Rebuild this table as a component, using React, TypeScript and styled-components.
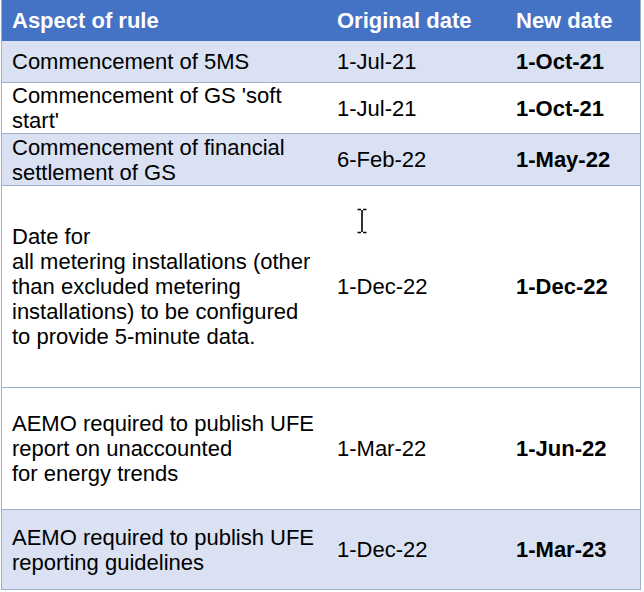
import React from "react";
import styled, { createGlobalStyle } from "styled-components";

const Global = createGlobalStyle`
  html, body { margin: 0; padding: 0; background: #ffffff; }
  body { font-family: "Liberation Sans", Arial, sans-serif; }
`;

const Page = styled.div`
  position: relative;
  width: 644px;
  height: 592px;
  padding-left: 1px;
  box-sizing: border-box;
`;

const Table = styled.div`
  width: 640px;
  border-left: 1px solid #9fb0cf;
  border-right: 1px solid #9fb0cf;
  box-sizing: border-box;
  display: flex;
  flex-direction: column;
`;

const Row = styled.div<{ $h: number; $tone: "head" | "band" | "plain" }>`
  display: grid;
  grid-template-columns: 325px 179px 1fr;
  align-items: center;
  height: ${(p) => p.$h}px;
  box-sizing: border-box;
  border-bottom: 1px solid ${(p) => (p.$tone === "head" ? "#4472c4" : "#9fb0cf")};
  background: ${(p) =>
    p.$tone === "head" ? "#4472c4" : p.$tone === "band" ? "#d9e1f2" : "#ffffff"};
  color: ${(p) => (p.$tone === "head" ? "#ffffff" : "#000000")};
`;

const Cell = styled.div<{ $bold?: boolean }>`
  padding-left: 10px;
  padding-right: 10px;
  font-size: 22px;
  line-height: 25px;
  font-weight: ${(p) => (p.$bold ? 700 : 400)};
`;

const Cursor = styled.svg`
  position: absolute;
  left: 356px;
  top: 208px;
`;

type R = { h: number; tone: "band" | "plain"; aspect: React.ReactNode; orig: string; next: string };

const rows: R[] = [
  { h: 42, tone: "band", aspect: "Commencement of 5MS", orig: "1-Jul-21", next: "1-Oct-21" },
  { h: 51, tone: "plain", aspect: "Commencement of GS 'soft start'", orig: "1-Jul-21", next: "1-Oct-21" },
  { h: 52, tone: "band", aspect: "Commencement of financial settlement of GS", orig: "6-Feb-22", next: "1-May-22" },
  {
    h: 202,
    tone: "plain",
    aspect: (
      <>
        Date for
        <br />
        all metering installations (other than excluded metering installations) to be configured to provide
        5-minute data.
      </>
    ),
    orig: "1-Dec-22",
    next: "1-Dec-22",
  },
  {
    h: 122,
    tone: "plain",
    aspect: (
      <>
        AEMO required to publish UFE report on unaccounted
        <br />
        for energy trends
      </>
    ),
    orig: "1-Mar-22",
    next: "1-Jun-22",
  },
  {
    h: 80,
    tone: "band",
    aspect: "AEMO required to publish UFE reporting guidelines",
    orig: "1-Dec-22",
    next: "1-Mar-23",
  },
];

export default function App() {
  return (
    <Page>
      <Global />
      <Table>
        <Row $h={41} $tone="head">
          <Cell $bold>Aspect of rule</Cell>
          <Cell $bold>Original date</Cell>
          <Cell $bold>New date</Cell>
        </Row>
        {rows.map((r, i) => (
          <Row key={i} $h={r.h} $tone={r.tone}>
            <Cell>{r.aspect}</Cell>
            <Cell>{r.orig}</Cell>
            <Cell $bold>{r.next}</Cell>
          </Row>
        ))}
      </Table>
      <Cursor width="12" height="26" viewBox="0 0 12 26">
        <path
          d="M1.5 1.5h3.5M7 1.5h3.5M6 2v22M1.5 24.5h3.5M7 24.5h3.5"
          stroke="#000"
          strokeWidth="1.6"
          fill="none"
        />
      </Cursor>
    </Page>
  );
}
